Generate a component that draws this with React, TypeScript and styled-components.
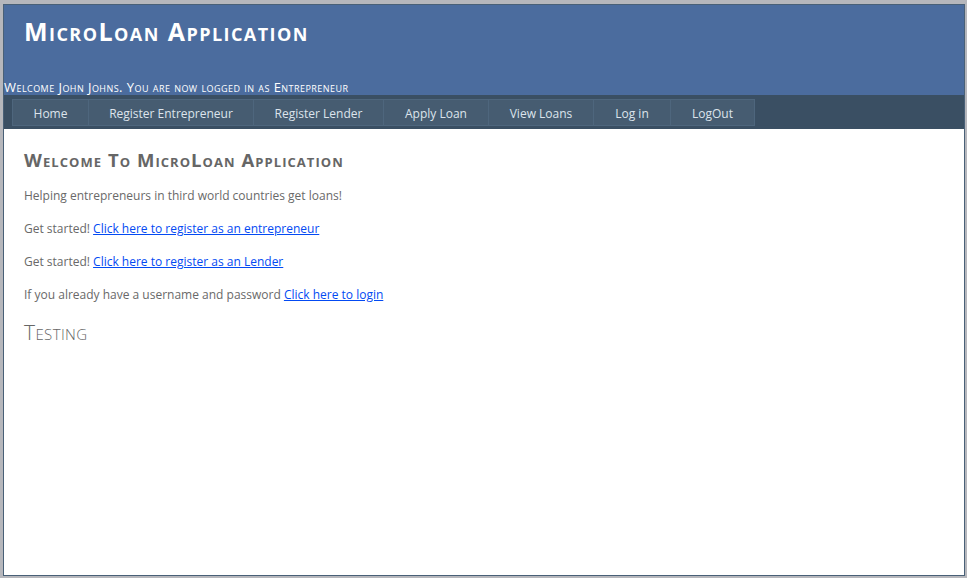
import React from "react";
import styled, { createGlobalStyle } from "styled-components";

const Global = createGlobalStyle`
  html, body { margin: 0; padding: 0; }
  body {
    background: #b6b7bc;
    font-family: "Open Sans", "Noto Sans", "DejaVu Sans", sans-serif;
  }
`;

const Page = styled.div`
  width: 960px;
  height: 570px;
  margin: 4px 0 0 3px;
  border: 1px solid #496077;
  background: #fff;
  display: flex;
  flex-direction: column;
`;

const Header = styled.header`
  background: #4b6c9e;
  height: 90px;
  display: flex;
  flex-direction: column;
  justify-content: space-between;
`;

const Title = styled.h1`
  margin: 0;
  padding: 11px 0 0 20px;
  color: #fff;
  font-size: 25px;
  line-height: 30px;
  font-weight: 700;
  font-variant: small-caps;
  letter-spacing: 1.45px;
`;

const Welcome = styled.div`
  color: #fff;
  font-size: 13px;
  line-height: 15px;
  font-variant: small-caps;
  letter-spacing: 0.45px;
`;

const MenuBar = styled.nav`
  background: #3a4f63;
  height: 34px;
  box-sizing: border-box;
  padding: 4px 0 0 8px;
  display: flex;
  align-items: flex-start;
`;

const MenuItem = styled.a<{ $w: number }>`
  box-sizing: border-box;
  width: ${(p) => p.$w}px;
  height: 27px;
  padding-top: 2px;
  background: #465c71;
  border: 1px solid #4e667d;
  margin-right: -1px;
  color: #dde4ec;
  font-size: 12px;
  display: flex;
  align-items: center;
  justify-content: center;
  text-decoration: none;
  white-space: nowrap;
`;

const Main = styled.main`
  padding: 19px 20px 0 20px;
  color: #696969;
`;

const Heading = styled.h2`
  margin: 0 0 15px;
  font-size: 18.5px;
  line-height: 24px;
  font-weight: 700;
  font-variant: small-caps;
  letter-spacing: 1.05px;
  color: #666;
`;

const Para = styled.p`
  margin: 0 0 16px;
  font-size: 12px;
  line-height: 17px;
`;

const Link = styled.a`
  color: #034af3;
  text-decoration: underline;
`;

const SubHeading = styled.h3`
  margin: 0;
  font-size: 21px;
  line-height: 26px;
  font-weight: 300;
  font-variant: small-caps;
  letter-spacing: 0.4px;
  color: #666;
`;

const menu: [string, number][] = [
  ["Home", 77],
  ["Register Entrepreneur", 166],
  ["Register Lender", 131],
  ["Apply Loan", 106],
  ["View Loans", 106],
  ["Log in", 78],
  ["LogOut", 85],
];

export default function App() {
  return (
    <>
      <Global />
      <Page>
        <Header>
          <Title>MicroLoan Application</Title>
          <Welcome>Welcome John Johns. You are now logged in as Entrepreneur</Welcome>
        </Header>
        <MenuBar>
          {menu.map(([t, w]) => (
            <MenuItem key={t} $w={w} href="#">
              {t}
            </MenuItem>
          ))}
        </MenuBar>
        <Main>
          <Heading>Welcome To MicroLoan Application</Heading>
          <Para>Helping entrepreneurs in third world countries get loans!</Para>
          <Para>
            Get started! <Link href="#">Click here to register as an entrepreneur</Link>
          </Para>
          <Para>
            Get started! <Link href="#">Click here to register as an Lender</Link>
          </Para>
          <Para>
            If you already have a username and password <Link href="#">Click here to login</Link>
          </Para>
          <SubHeading>Testing</SubHeading>
        </Main>
      </Page>
    </>
  );
}
